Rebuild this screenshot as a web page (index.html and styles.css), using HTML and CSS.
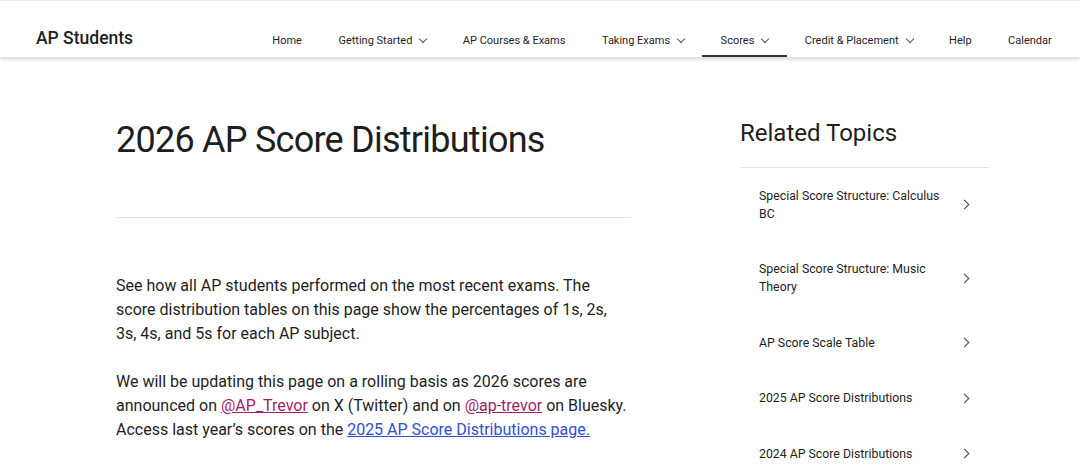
FILE: index.html
```html
<!DOCTYPE html>
<html>

<head>
    <meta charset="UTF-8">
    <title>2026 AP Score Distributions</title>
    <link rel="stylesheet" href="styles.css">
</head>

<body>
    <header class="site-header">
        <div class="logo">AP Students</div>
        <ul class="nav">
            <li>Home</li>
            <li>Getting Started <span class="caret"></span></li>
            <li>AP Courses &amp; Exams</li>
            <li>Taking Exams <span class="caret"></span></li>
            <li class="active">Scores <span class="caret"></span></li>
            <li>Credit &amp; Placement <span class="caret"></span></li>
            <li>Help</li>
            <li>Calendar</li>
        </ul>
    </header>

    <div class="page">
        <main class="main">
            <h1>2026 AP Score Distributions</h1>
            <hr>
            <p>See how all AP students performed on the most recent exams. The score distribution tables on this
                page show the percentages of 1s, 2s, 3s, 4s, and 5s for each AP subject.</p>
            <p>We will be updating this page on a rolling basis as 2026 scores are announced on <a class="social"
                    href="#">@AP_Trevor</a> on X (Twitter) and on <a class="social" href="#">@ap-trevor</a> on
                Bluesky. Access last year’s scores on the <a class="link" href="#">2025 AP Score Distributions
                    page.</a></p>
        </main>

        <aside class="related">
            <h2>Related Topics</h2>
            <ul class="topics">
                <li><span>Special Score Structure: Calculus BC</span><span class="chev"></span></li>
                <li><span>Special Score Structure: Music Theory</span><span class="chev"></span></li>
                <li><span>AP Score Scale Table</span><span class="chev"></span></li>
                <li><span>2025 AP Score Distributions</span><span class="chev"></span></li>
                <li><span>2024 AP Score Distributions</span><span class="chev"></span></li>
            </ul>
        </aside>
    </div>
</body>

</html>
```

FILE: styles.css
```css
body {
    margin: 0;
    font-family: Roboto, "Liberation Sans", sans-serif;
    color: #1e1e1e;
    background: #fff;
}

ul {
    list-style-type: none;
    margin: 0;
    padding: 0;
}

.site-header {
    display: flex;
    justify-content: space-between;
    align-items: flex-end;
    height: 57px;
    border-top: 1px solid #e6e6e6;
    box-sizing: border-box;
    padding: 0 10px 0 36px;
    box-shadow: 0 3px 3px rgba(0, 0, 0, 0.13);
}

.logo {
    font-size: 17.5px;
    font-weight: 500;
    color: #1e1e1e;
    padding-bottom: 9px;
}

.nav {
    display: flex;
}

.nav li {
    font-size: 11px;
    color: #1e1e1e;
    padding: 0 18.25px 8px;
    border-bottom: 2px solid transparent;
    display: flex;
    align-items: center;
}

.nav li.active {
    border-bottom-color: #333;
}

.caret {
    display: inline-block;
    width: 5px;
    height: 5px;
    border-right: 1px solid #555;
    border-bottom: 1px solid #555;
    transform: rotate(45deg);
    margin: 0 0 3px 8px;
}

.page {
    display: flex;
    padding: 0 91px 0 116px;
    gap: 109px;
}

.main {
    width: 515px;
    flex: none;
}

h1 {
    font-size: 36px;
    font-weight: 400;
    letter-spacing: -0.75px;
    margin: 61px 0 0;
    line-height: 44px;
}

hr {
    border: 0;
    border-top: 1px solid #e4e4e4;
    margin: 55px 0 0;
}

.main p {
    font-size: 16px;
    line-height: 24px;
    margin: 0 0 24px;
}

.main hr + p {
    margin-top: 56px;
}

.social {
    color: #9e1f63;
}

.link {
    color: #324dd0;
}

.related {
    flex: 1;
}

h2 {
    font-size: 24px;
    font-weight: 400;
    margin: 60px 0 0;
    line-height: 32px;
    padding-bottom: 18px;
    border-bottom: 1px solid #e4e4e4;
}

.topics li {
    display: flex;
    justify-content: space-between;
    align-items: center;
    font-size: 12.3px;
    line-height: 18px;
    padding: 18.75px 21px 18.75px 19px;
}

.topics li span:first-child {
    max-width: 190px;
}

.chev {
    display: inline-block;
    width: 6px;
    height: 6px;
    border-right: 1.2px solid #444;
    border-bottom: 1.2px solid #444;
    transform: rotate(-45deg);
}
```
